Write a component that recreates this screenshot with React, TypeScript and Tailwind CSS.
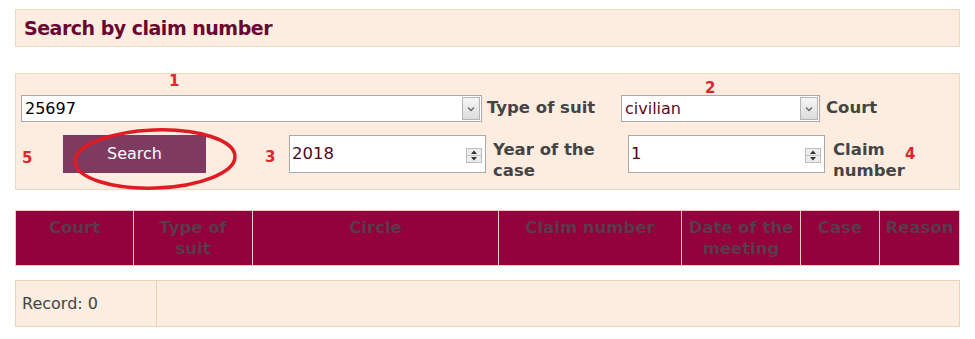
import React from "react";

function SelectBox({ value, width, color }: { value: string; width: string; color: string }) {
  return (
    <div className={`${width} h-[27px] border border-[#a9a9a9] bg-white flex items-center relative`}>
      <span className={`pl-[3px] text-[16px] leading-none ${color}`}>{value}</span>
      <div className="absolute right-[1px] top-[1px] bottom-[1px] w-[18px] border border-[#b5b5b5] bg-gradient-to-b from-[#f6f6f6] to-[#dcdcdc] flex items-center justify-center">
        <svg width="8" height="6" viewBox="0 0 8 6">
          <path d="M1 1.5 L4 4.5 L7 1.5" fill="none" stroke="#666" strokeWidth="1.3" />
        </svg>
      </div>
    </div>
  );
}

function NumberBox({ value, width }: { value: string; width: string }) {
  return (
    <div className={`${width} h-[38px] border border-[#a9a9a9] bg-white flex items-center relative`}>
      <span className="pl-[2px] text-[16.5px] leading-none text-[#4a0a25]">{value}</span>
      <div className="absolute right-[3px] top-[12px] w-[16px] h-[15px] border border-[#bdbdbd] bg-[#ececec] flex flex-col">
        <div className="flex-1 flex items-center justify-center border-b border-[#c4c4c4]">
          <svg width="6" height="4" viewBox="0 0 6 4"><path d="M0 4 L3 0.5 L6 4 Z" fill="#333" /></svg>
        </div>
        <div className="flex-1 flex items-center justify-center">
          <svg width="6" height="4" viewBox="0 0 6 4"><path d="M0 0 L3 3.5 L6 0 Z" fill="#333" /></svg>
        </div>
      </div>
    </div>
  );
}

const cols: { label: React.ReactNode; w: string }[] = [
  { label: "Court", w: "w-[118px]" },
  { label: <>Type of<br />suit</>, w: "w-[119px]" },
  { label: "Circle", w: "w-[246px]" },
  { label: "Claim number", w: "w-[183px]" },
  { label: <>Date of the<br />meeting</>, w: "w-[119px]" },
  { label: "Case", w: "w-[79px]" },
  { label: "Reason", w: "flex-1" },
];

function Mark({ n, className }: { n: string; className: string }) {
  return (
    <span className={`absolute text-[15px] font-bold leading-none text-[#e0262b] ${className}`}>{n}</span>
  );
}

export default function App() {
  return (
    <div className="w-[975px] h-[339px] bg-white font-['DejaVu_Sans',sans-serif] relative">
      <div className="px-[15px] pt-[9px]">
        <div className="h-[38px] border border-[#eed8c2] bg-[#fcede0] flex items-center pl-[8px]">
          <span className="text-[19px] font-bold text-[#6a0730] tracking-[-0.5px]">Search by claim number</span>
        </div>

        <div className="mt-[26px] h-[117px] border border-[#eed8c2] bg-[#fcede0] relative">
          <div className="pt-[21px] pl-[5px] flex items-center">
            <SelectBox value="25697" width="w-[461px]" color="text-black" />
            <span className="ml-[5px] w-[134px] text-[16.5px] font-bold text-[#444]">Type of suit</span>
            <SelectBox value="civilian" width="w-[199px]" color="text-[#5a0a2a]" />
            <span className="ml-[6px] text-[16.5px] font-bold text-[#444]">Court</span>
          </div>
          <div className="mt-[13px] flex items-start">
            <button className="ml-[47px] w-[143px] h-[38px] bg-[#7e3a5f] text-white text-[16px] flex items-center justify-center">
              Search
            </button>
            <div className="ml-[83px]">
              <NumberBox value="2018" width="w-[197px]" />
            </div>
            <span className="ml-[7px] mt-[4px] w-[135px] text-[16.5px] font-bold text-[#444] leading-[21px]">
              Year of the<br />case
            </span>
            <NumberBox value="1" width="w-[197px]" />
            <span className="ml-[8px] mt-[4px] text-[16.5px] font-bold text-[#444] leading-[21px]">
              Claim<br />number
            </span>
          </div>
          <Mark n="1" className="left-[153px] top-[0px]" />
          <Mark n="2" className="left-[689px] top-[7px]" />
          <Mark n="3" className="left-[249px] top-[76px]" />
          <Mark n="4" className="left-[889px] top-[73px]" />
          <Mark n="5" className="left-[6px] top-[77px]" />
          <svg className="absolute left-[56px] top-[53px]" width="168" height="66" viewBox="0 0 168 66">
            <ellipse cx="83" cy="32" rx="80" ry="29" fill="none" stroke="#e01b24" strokeWidth="3.5" transform="rotate(-2 83 32)" />
          </svg>
        </div>

        <div className="mt-[20px] h-[56px] border border-[#f2cdbd] bg-[#93003b] flex">
          {cols.map((c, i) => (
            <div
              key={i}
              className={`${c.w} ${i < cols.length - 1 ? "border-r border-[#f2cdbd]" : ""} pt-[6px] text-center text-[16.5px] font-bold leading-[21px] text-[#5a3a4b] px-[2px]`}
            >
              {c.label}
            </div>
          ))}
        </div>

        <div className="mt-[14px] h-[47px] border border-[#ead3b9] bg-[#fbede0] flex">
          <div className="w-[141px] border-r border-[#ead3b9] flex items-center pl-[6px] text-[16px] text-[#444]">
            Record: 0
          </div>
        </div>
      </div>
    </div>
  );
}
